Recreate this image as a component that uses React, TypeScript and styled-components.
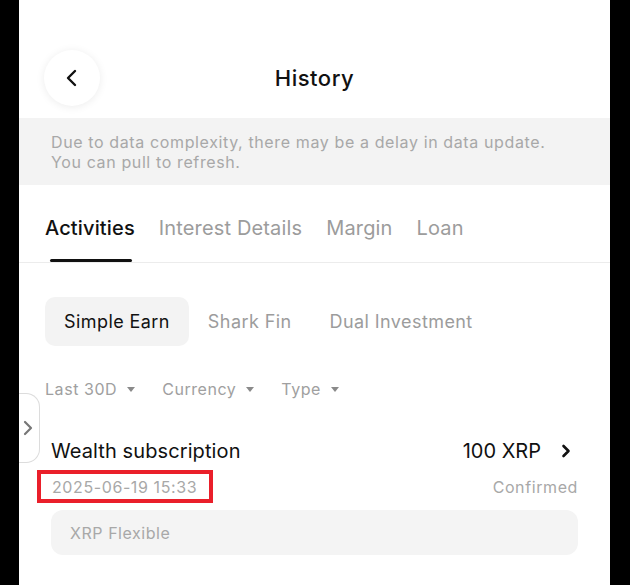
import React from "react";
import styled, { createGlobalStyle } from "styled-components";

const Global = createGlobalStyle`
  html, body { margin: 0; padding: 0; background: #000; }
  body { font-family: Inter, "Noto Sans", sans-serif; -webkit-font-smoothing: antialiased; }
  * { box-sizing: border-box; }
`;

const Phone = styled.div`
  position: relative;
  width: 591px;
  height: 585px;
  margin-left: 19px;
  background: #fff;
  overflow: hidden;
`;

const Header = styled.header`
  display: grid;
  grid-template-columns: 1fr auto 1fr;
  align-items: center;
  padding: 50px 25px 12px;
`;

const BackButton = styled.button`
  width: 56px;
  height: 56px;
  border-radius: 50%;
  border: none;
  background: #fff;
  box-shadow: 0 1px 8px rgba(0, 0, 0, 0.08);
  display: flex;
  align-items: center;
  justify-content: center;
  padding: 0;
  justify-self: start;
`;

const Title = styled.h1`
  margin: 0;
  font-size: 22px;
  font-weight: 500;
  letter-spacing: 0.5px;
  color: #111;
  line-height: 28px;
`;

const Notice = styled.div`
  background: #f3f3f3;
  padding: 14px 32px 13px;
  font-size: 16px;
  line-height: 20px;
  letter-spacing: 0.62px;
  color: #a8a8a8;
`;

const TabBar = styled.nav`
  display: flex;
  gap: 24px;
  padding: 0 26px;
  border-bottom: 1px solid #ececec;
`;

const Tab = styled.div<{ $active?: boolean }>`
  position: relative;
  padding: 30px 0 21px;
  font-size: 20px;
  line-height: 26px;
  letter-spacing: 0.15px;
  color: ${(p) => (p.$active ? "#111" : "#9c9c9c")};
  font-weight: ${(p) => (p.$active ? 500 : 400)};
  &::after {
    content: "";
    display: ${(p) => (p.$active ? "block" : "none")};
    position: absolute;
    left: 5px;
    right: 3px;
    bottom: 0;
    height: 3px;
    border-radius: 2px;
    background: #111;
  }
`;

const ChipRow = styled.div`
  display: flex;
  gap: 0;
  padding: 0 26px;
  margin-top: 34px;
`;

const Chip = styled.div<{ $active?: boolean }>`
  height: 49px;
  padding: 0 19px;
  display: flex;
  align-items: center;
  border-radius: 10px;
  font-size: 18px;
  letter-spacing: 0.42px;
  color: ${(p) => (p.$active ? "#111" : "#9c9c9c")};
  background: ${(p) => (p.$active ? "#f3f3f3" : "transparent")};
`;

const FilterRow = styled.div`
  display: flex;
  gap: 27px;
  padding: 0 26px;
  margin-top: 33px;
`;

const Filter = styled.div`
  display: flex;
  align-items: center;
  gap: 10px;
  font-size: 16px;
  line-height: 20px;
  letter-spacing: 0.55px;
  color: #a0a0a0;
`;

const Caret = styled.span`
  width: 0;
  height: 0;
  border-left: 4px solid transparent;
  border-right: 4px solid transparent;
  border-top: 5px solid #8a8a8a;
`;

const Record = styled.section`
  padding: 0 32px;
  margin-top: 39px;
`;

const RecordTop = styled.div`
  display: flex;
  justify-content: space-between;
  align-items: center;
`;

const RecordTitle = styled.div`
  font-size: 20px;
  line-height: 26px;
  letter-spacing: 0.1px;
  color: #111;
`;

const Amount = styled.div`
  display: flex;
  align-items: center;
  gap: 20px;
  font-size: 20px;
  line-height: 26px;
  color: #111;
  padding-right: 7px;
`;

const RecordMeta = styled.div`
  display: flex;
  justify-content: space-between;
  margin-top: 13px;
  font-size: 16px;
  line-height: 20px;
  letter-spacing: 0.6px;
  color: #a8a8a8;
`;

const DateText = styled.span`
  position: relative;
  padding-left: 1px;
`;

const Highlight = styled.span`
  position: absolute;
  left: -14px;
  top: -7px;
  width: 176px;
  height: 33px;
  border: 4px solid #ea1f2a;
`;

const ProductBox = styled.div`
  margin-top: 13px;
  height: 45px;
  border-radius: 12px;
  background: #f4f4f4;
  padding: 0 19px;
  display: flex;
  align-items: center;
  font-size: 16px;
  letter-spacing: 0.55px;
  color: #a8a8a8;
`;

const SideTab = styled.div`
  position: absolute;
  left: 0;
  top: 393px;
  width: 21px;
  height: 70px;
  background: #fff;
  border: 1px solid #dcdcdc;
  border-left: none;
  border-radius: 0 14px 14px 0;
  display: flex;
  align-items: center;
  justify-content: flex-start;
  padding-left: 3px;
`;

export default function App() {
  return (
    <>
      <Global />
      <Phone>
        <Header>
          <BackButton aria-label="Back">
            <svg width="14" height="18" viewBox="0 0 14 18">
              <path d="M10 2 L3 9 L10 16" fill="none" stroke="#111" strokeWidth="2.4" strokeLinecap="round" strokeLinejoin="round" />
            </svg>
          </BackButton>
          <Title>History</Title>
          <span />
        </Header>
        <Notice>
          Due to data complexity, there may be a delay in data update.
          <br />
          You can pull to refresh.
        </Notice>
        <TabBar>
          <Tab $active>Activities</Tab>
          <Tab>Interest Details</Tab>
          <Tab>Margin</Tab>
          <Tab>Loan</Tab>
        </TabBar>
        <ChipRow>
          <Chip $active>Simple Earn</Chip>
          <Chip>Shark Fin</Chip>
          <Chip>Dual Investment</Chip>
        </ChipRow>
        <FilterRow>
          <Filter>Last 30D <Caret /></Filter>
          <Filter>Currency <Caret /></Filter>
          <Filter>Type <Caret /></Filter>
        </FilterRow>
        <Record>
          <RecordTop>
            <RecordTitle>Wealth subscription</RecordTitle>
            <Amount>
              100 XRP
              <svg width="10" height="14" viewBox="0 0 10 14">
                <path d="M2.5 2 L7.5 7 L2.5 12" fill="none" stroke="#111" strokeWidth="2.6" strokeLinecap="round" strokeLinejoin="round" />
              </svg>
            </Amount>
          </RecordTop>
          <RecordMeta>
            <DateText>
              2025-06-19 15:33
              <Highlight />
            </DateText>
            <span>Confirmed</span>
          </RecordMeta>
          <ProductBox>XRP Flexible</ProductBox>
        </Record>
        <SideTab>
          <svg width="12" height="18" viewBox="0 0 12 18">
            <path d="M3 3 L9 9 L3 15" fill="none" stroke="#777" strokeWidth="2.2" strokeLinecap="round" strokeLinejoin="round" />
          </svg>
        </SideTab>
      </Phone>
    </>
  );
}
